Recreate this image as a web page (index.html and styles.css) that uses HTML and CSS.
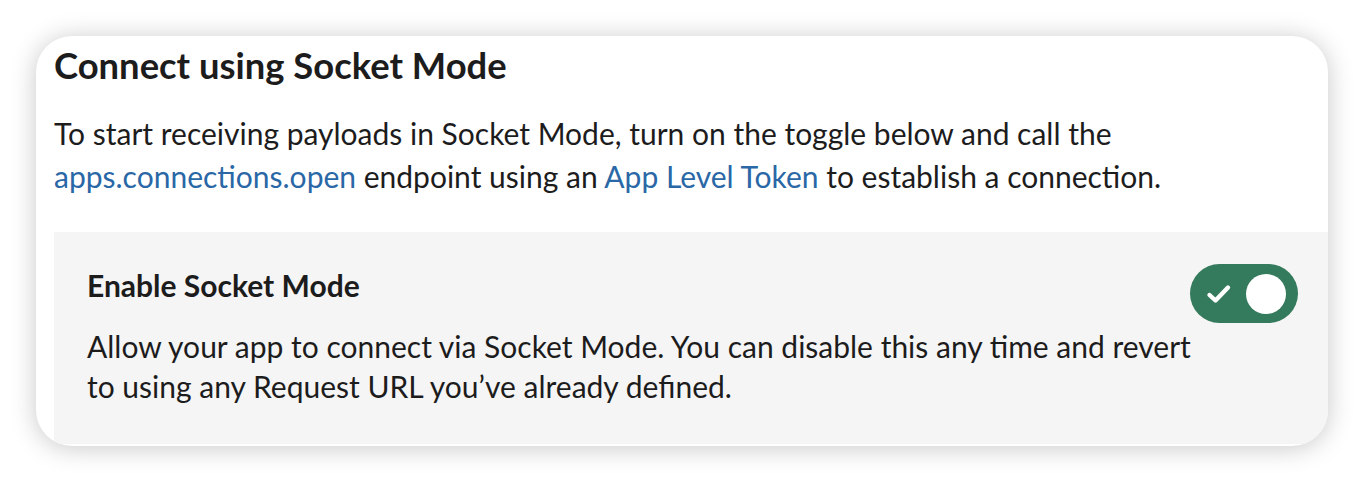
FILE: index.html
```html
<!DOCTYPE html>
<html lang="en">
<head>
<meta charset="utf-8">
<title>Connect using Socket Mode</title>
<link rel="stylesheet" href="styles.css">
</head>
<body>
<div class="card">
  <h2 class="card-title">Connect using Socket Mode</h2>
  <p class="card-intro">To start receiving payloads in Socket Mode, turn on the toggle below and call the <a href="#" class="link">apps.connections.open</a> endpoint using an <a href="#" class="link">App Level Token</a> to establish a connection.</p>
  <div class="setting">
    <div class="setting-text">
      <div class="setting-title">Enable Socket Mode</div>
      <p class="setting-desc">Allow your app to connect via Socket Mode. You can disable this any time and revert to using any Request URL you’ve already defined.</p>
    </div>
    <div class="toggle" role="switch" aria-checked="true">
      <svg class="toggle-check" width="26" height="22" viewBox="0 0 26 22" aria-hidden="true">
        <path d="M3.5 12 L9.5 17.5 L22 4.5" fill="none" stroke="#ffffff" stroke-width="4.4" stroke-linecap="round" stroke-linejoin="round"/>
      </svg>
      <span class="toggle-knob"></span>
    </div>
  </div>
</div>
</body>
</html>
```

FILE: styles.css
```css
html, body {
  margin: 0;
  padding: 0;
  background: #ffffff;
}

body {
  font-family: Lato, "Open Sans", sans-serif;
  color: #1d1c1d;
  padding: 36px;
  width: 1292px;
}

.card {
  background: #ffffff;
  border-radius: 36px;
  box-shadow: 0 2px 26px rgba(0, 0, 0, 0.22);
  overflow: hidden;
  padding: 7px 0 0 18px;
  height: 410px;
  box-sizing: border-box;
}

.card-title {
  margin: 0;
  font-size: 36.4px;
  font-weight: 700;
  line-height: 44px;
}

.card-intro {
  margin: 25px 0 0 0;
  font-size: 30px;
  line-height: 43px;
  padding-right: 40px;
}

.link {
  color: #2a67a6;
  text-decoration: none;
}

.setting {
  margin-top: 34px;
  background: #f5f5f5;
  display: flex;
  align-items: flex-start;
  padding: 32px 30px 0 33px;
  height: 212px;
  box-sizing: border-box;
}

.setting-text {
  flex: 1;
  padding-top: 3px;
  margin-right: -30px;
}

.setting-title {
  font-size: 30px;
  font-weight: 700;
  line-height: 36px;
}

.setting-desc {
  margin: 23px 0 0 0;
  font-size: 30px;
  line-height: 40px;
}

.toggle {
  width: 108px;
  height: 59px;
  border-radius: 30px;
  background: #347a5c;
  display: flex;
  align-items: center;
  justify-content: space-between;
  padding: 0 12px 0 16px;
  box-sizing: border-box;
  flex-shrink: 0;
}

.toggle-check {
  display: block;
}

.toggle-knob {
  width: 40px;
  height: 40px;
  border-radius: 50%;
  background: #ffffff;
}
```
